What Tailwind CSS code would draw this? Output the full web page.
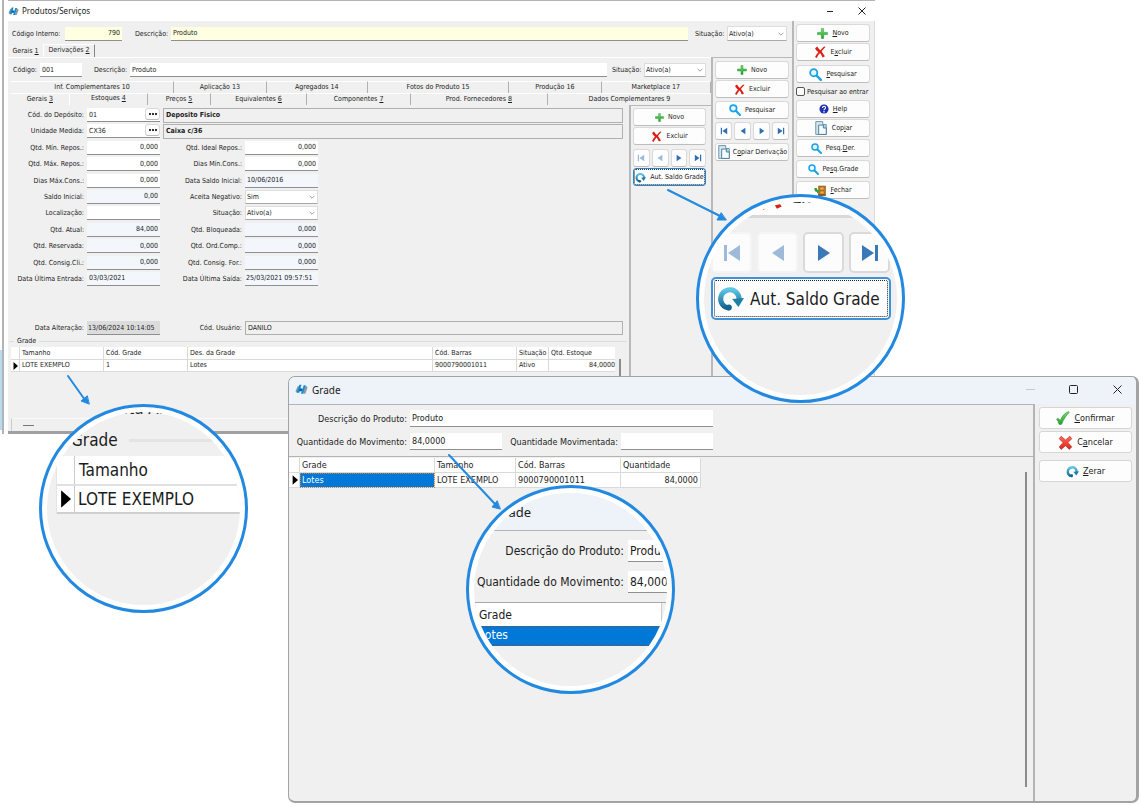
<!DOCTYPE html>
<html lang="pt-BR">
<head>
<meta charset="utf-8">
<title>Produtos/Serviços</title>
<script src="https://cdn.jsdelivr.net/npm/@tailwindcss/browser@4"></script>
</head>
<body class="relative min-h-screen overflow-hidden bg-white font-['DejaVu_Sans_Condensed','DejaVu_Sans',sans-serif] text-[7px] leading-[12px] text-[#1c1c1c]">

<svg class="absolute size-0" aria-hidden="true">
  <defs>
    <linearGradient id="gGreen" x1="0" y1="0" x2="0" y2="1"><stop offset="0" stop-color="#7be07b"/><stop offset="1" stop-color="#1f9a2a"/></linearGradient>
    <linearGradient id="gTeal" x1="0" y1="0" x2="0" y2="1"><stop offset="0" stop-color="#5cc4e4"/><stop offset="1" stop-color="#15658f"/></linearGradient>
    <linearGradient id="gRed" x1="0" y1="0" x2="0" y2="1"><stop offset="0" stop-color="#ff6b5e"/><stop offset="1" stop-color="#d9261c"/></linearGradient>
    <symbol id="logo" viewBox="0 0 24 20"><path d="M1 13 5 4h4L5 15H2z" fill="#8d979d"/><path d="M19 4h3l1 3-4 11h-4z" fill="#8d979d"/><path d="M8 1h4L8 16H3z" fill="#168bd2"/><path d="M9 8h5l-1 5H8z" fill="#0d5b94"/><path d="M16 2h4l-5 16h-4z" fill="#168bd2"/></symbol>
    <symbol id="plus" viewBox="0 0 20 20"><path d="M8 1h4v7h7v4h-7v7H8v-7H1V8h7z" fill="url(#gGreen)" stroke="#2c9a35" stroke-width="1"/></symbol>
    <symbol id="ex" viewBox="0 0 22 22"><path d="M2 4 6 1c2 3 3 5 6 7 2-3 4-5 7-7l2 1c-3 3-5 5-7 8 2 3 4 6 6 9l-4 2c-2-3-3-6-5-8-2 2-4 5-6 9l-3-2c2-4 4-6 6-9-3-2-5-5-6-7z" fill="#dc1e14"/></symbol>
    <symbol id="lens" viewBox="0 0 22 22"><circle cx="8" cy="8" r="6" fill="#e6f7ff" stroke="#17a3e6" stroke-width="3"/><path d="m13 13 7 7" stroke="#17a3e6" stroke-width="4" stroke-linecap="round"/></symbol>
    <symbol id="help" viewBox="0 0 22 22"><circle cx="11" cy="11" r="10" fill="#1b2fb0"/><path d="M7.500 9c0-5 7-5 7-1 0 3-3.500 2.500-3.500 5.500M11 15.500v3" fill="none" stroke="#fff" stroke-width="2.500"/></symbol>
    <symbol id="copy" viewBox="0 0 24 24"><path d="M3 1h12v5h6v17H3z" fill="#d5e6f0" stroke="#5f8ba3" stroke-width="1.500"/><path d="M8 7h8l5 5v11H8z" fill="#f5fbfe" stroke="#3d7590" stroke-width="1.500"/><path d="M16 7v5h5" fill="#b9d9e8" stroke="#3d7590" stroke-width="1.500"/></symbol>
    <symbol id="door" viewBox="0 0 24 22"><path d="M9 2h14v19H9z" fill="#c9791f" stroke="#7a4a12"/><path d="M12 4h8v6h-8zM12 12h8v6h-8z" fill="#eab04e" stroke="#8a5515"/><path d="M1 6h5v3l6 3-6 5v-3c-3 0-4-2-5-4z" fill="#2f9e38"/><path d="M8 20h15" stroke="#5b3a10" stroke-width="2"/></symbol>
    <symbol id="first" viewBox="0 0 20 20"><path d="M2 2h3v16H2zM18 2v16L6 10z" fill="currentColor"/></symbol>
    <symbol id="prev" viewBox="0 0 20 20"><path d="M16 2v16L4 10z" fill="currentColor"/></symbol>
    <symbol id="next" viewBox="0 0 20 20"><path d="M4 2v16l12-8z" fill="currentColor"/></symbol>
    <symbol id="last" viewBox="0 0 20 20"><path d="M15 2h3v16h-3zM2 2v16l12-8z" fill="currentColor"/></symbol>
    <symbol id="redo" viewBox="0 0 24 24"><path d="M11 20.500C5 20 2.500 15 3.500 10.500 5 4 14 2 18 7.500c1.500 2 2 4 1.500 6" fill="none" stroke="url(#gTeal)" stroke-width="4.500"/><path d="m13.500 12.500 10.500-1-5 8z" fill="#1f7fa8"/><circle cx="10.500" cy="20" r="2.700" fill="#15658f"/></symbol>
    <symbol id="check" viewBox="0 0 24 24"><path d="M1 14c2-2 4-2 6 3C10 9 15 3 22 1l1 1C17 8 13 14 10 22c-1 2-4 2-5 0-1-3-2-6-4-8z" fill="url(#gGreen)" stroke="#27942f" stroke-width="1"/></symbol>
    <symbol id="cancel" viewBox="0 0 24 24"><path d="m5 2 7 6 7-6 3 4-6 6 6 7-4 4-6-6-7 6-3-4 6-7-6-6z" fill="url(#gRed)" stroke="#b9231a" stroke-width="1"/></symbol>
    <symbol id="chev" viewBox="0 0 10 10"><path d="m1 3 4 4 4-4" fill="none" stroke="#777" stroke-width="1.200"/></symbol>
    <symbol id="mark" viewBox="0 0 10 16"><path d="M1 0v16l9-8z" fill="#000"/></symbol>
  </defs>
</svg>

<div class="absolute top-[350px] left-0 h-[80px] w-[2px] bg-[#b5dbf3]"></div>

<!-- Produtos/Serviços -->
<main class="absolute top-0 right-[266px] left-[2px] border-l-2 border-[#b4b4b4] bg-white pl-1
  [&_input]:h-[14px] [&_input]:min-w-0 [&_input]:shrink-0 [&_input]:border-b [&_input]:border-[#8f8f8f] [&_input]:bg-white [&_input]:px-[2px]
  [&_label]:shrink-0 [&_label]:whitespace-nowrap
  [&_button]:flex [&_button]:h-[18px] [&_button]:items-center [&_button]:justify-center [&_button]:gap-1 [&_button]:rounded-[3px] [&_button]:border [&_button]:border-b-[#bdbdbd] [&_button]:border-[#d9d9d9] [&_button]:bg-[#fdfdfd] [&_button]:whitespace-nowrap">
  <header class="flex h-[21px] items-center gap-[3px] border-t border-[#b4b4b4] font-['Noto_Sans',sans-serif] text-[8px]">
    <svg class="h-[9px] w-[11px]"><use href="#logo"/></svg>
    <h1 class="flex-1">Produtos/Serviços</h1>
    <svg class="mr-[21px] size-[8px]" viewBox="0 0 8 8"><path d="M1 4.500h6" stroke="#222"/></svg>
    <svg class="mr-[9px] size-[8px]" viewBox="0 0 8 8"><path d="m.5.5 7 7m0-7-7 7" stroke="#222"/></svg>
  </header>

  <div class="flex border-r border-b-[3px] border-r-[#dcdcdc] border-b-[#a0a0a0] bg-[#f0f0f0]">
    <div class="min-w-0 flex-1">
      <div class="flex h-[23px] items-center gap-[2px] pt-[2px] pl-1">
        <label for="ci" class="w-[51px]">Código Interno:</label>
        <input id="ci" value="790" class="w-[57px] bg-[#ffffe1]! text-right">
        <label for="d1" class="ml-[11px] w-[34px]">Descrição:</label>
        <input id="d1" value="Produto" class="flex-1 bg-[#ffffe1]!">
        <label for="s1" class="ml-[5px] w-[30px]">Situação:</label>
        <span class="mr-[5px] flex h-[15px] w-[60px] items-center border border-[#ddd] border-b-[#aaa] bg-white pr-[2px]">
          <select id="s1" class="min-w-0 flex-1 appearance-none pl-px"><option>Ativo(a)</option></select><svg class="size-[6px]"><use href="#chev"/></svg>
        </span>
      </div>
      <nav class="flex h-[13px]">
        <a href="#gerais" class="w-[35px] pt-px text-center">Gerais <u>1</u></a>
        <a href="#derivacoes" class="h-[14px] w-[52px] border-t border-r border-l border-t-white border-r-[#888] border-l-white text-center leading-[11px]">Derivações <u>2</u></a>
      </nav>
      <div class="flex">
        <div class="min-w-0 flex-1">
          <div class="flex h-[24px] items-center gap-[2px] border-t border-white pt-px pr-[5px] pl-[5px]">
            <label for="co" class="w-[25px]">Código:</label>
            <input id="co" value="001" class="w-[42px]">
            <label for="d2" class="ml-[10px] w-[34px]">Descrição:</label>
            <input id="d2" value="Produto" class="flex-1">
            <label for="s2" class="ml-[3px] w-[30px]">Situação:</label>
            <span class="flex h-[14px] w-[62px] items-center border border-[#ddd] border-b-[#aaa] bg-white pr-[2px]">
              <select id="s2" class="min-w-0 flex-1 appearance-none pl-px"><option>Ativo(a)</option></select><svg class="size-[6px]"><use href="#chev"/></svg>
            </span>
          </div>
          <nav class="flex h-[12px] pl-[3px] text-center leading-[11px] whitespace-nowrap *:border-t *:border-r *:border-t-white *:border-r-[#b0b0b0]">
            <a href="#t10" class="flex-[163]">Inf. Complementares 10</a>
            <a href="#t13" class="flex-[92]">Aplicação 13</a>
            <a href="#t14" class="flex-[101]">Agregados 14</a>
            <a href="#t15" class="flex-[141]">Fotos do Produto 15</a>
            <a href="#t16" class="flex-[92]">Produção 16</a>
            <a href="#t17" class="flex-[109]">Marketplace 17</a>
          </nav>
          <nav class="flex h-[12px] pl-[3px] text-center leading-[11px] whitespace-nowrap *:border-t *:border-r *:border-t-white *:border-r-[#b0b0b0]">
            <a href="#t3" class="flex-[58] border-r-white!">Gerais <u>3</u></a>
            <a href="#t4" class="flex-[78] leading-[9px]">Estoques <u>4</u></a>
            <a href="#t5" class="flex-[62]">Preços <u>5</u></a>
            <a href="#t6" class="flex-[96]">Equivalentes <u>6</u></a>
            <a href="#t7" class="flex-[103]">Componentes <u>7</u></a>
            <a href="#t8" class="flex-[137]">Prod. Fornecedores <u>8</u></a>
            <a href="#t9" class="flex-[164] border-r-0!">Dados Complementares 9</a>
          </nav>
          <div class="flex">
            <div class="min-w-0 flex-1">
              <form class="flex h-[182px] flex-col justify-between pt-[2px] pr-[6px] *:flex *:h-4 *:items-center *:gap-[3px] [&_label]:w-[76px] [&_label]:text-right [&_input]:w-[73px]">
                <div><label for="f1">Cód. do Depósito:</label><span class="flex w-[73px] border-b border-[#8f8f8f] bg-white"><input id="f1" value="01" class="h-[13px]! w-0! flex-1 border-0!"><button type="button" aria-label="Procurar depósito" class="h-[12px]! w-[15px]"><svg class="h-[2px] w-[8px]" viewBox="0 0 8 2"><path d="M0 0h2v2H0zM3 0h2v2H3zM6 0h2v2H6z" fill="#333"/></svg></button></span><output class="h-[15px] flex-1 border border-[#b0b0b0] px-[2px] font-bold">Deposito Fisico</output></div>
                <div><label for="f2">Unidade Medida:</label><span class="flex w-[73px] border-b border-[#8f8f8f] bg-white"><input id="f2" value="CX36" class="h-[13px]! w-0! flex-1 border-0!"><button type="button" aria-label="Procurar unidade" class="h-[12px]! w-[15px]"><svg class="h-[2px] w-[8px]" viewBox="0 0 8 2"><path d="M0 0h2v2H0zM3 0h2v2H3zM6 0h2v2H6z" fill="#333"/></svg></button></span><output class="h-[15px] flex-1 border border-[#b0b0b0] px-[2px] font-bold">Caixa c/36</output></div>
                <div><label for="f3">Qtd. Mín. Repos.:</label><input id="f3" value="0,000" class="text-right"><label for="g3" class="w-[79px]!">Qtd. Ideal Repos.:</label><input id="g3" value="0,000" class="text-right"></div>
                <div><label for="f4">Qtd. Máx. Repos.:</label><input id="f4" value="0,000" class="text-right"><label for="g4" class="w-[79px]!">Dias Mín.Cons.:</label><input id="g4" value="0,000" class="text-right"></div>
                <div><label for="f5">Dias Máx.Cons.:</label><input id="f5" value="0,000" class="text-right"><label for="g5" class="w-[79px]!">Data Saldo Inicial:</label><input id="g5" value="10/06/2016" class="bg-[#f3f7fc]!"></div>
                <div><label for="f6">Saldo Inicial:</label><input id="f6" value="0,00" class="bg-[#f3f7fc]! text-right"><label for="g6" class="w-[79px]!">Aceita Negativo:</label><span class="flex h-[14px] w-[73px] items-center border border-[#ddd] border-b-[#aaa] bg-white pr-[2px]"><select id="g6" class="min-w-0 flex-1 appearance-none pl-px"><option>Sim</option></select><svg class="size-[6px]"><use href="#chev"/></svg></span></div>
                <div><label for="f7">Localização:</label><input id="f7" value=""><label for="g7" class="w-[79px]!">Situação:</label><span class="flex h-[14px] w-[73px] items-center border border-[#ddd] border-b-[#aaa] bg-white pr-[2px]"><select id="g7" class="min-w-0 flex-1 appearance-none pl-px"><option>Ativo(a)</option></select><svg class="size-[6px]"><use href="#chev"/></svg></span></div>
                <div><label for="f8">Qtd. Atual:</label><input id="f8" value="84,000" class="bg-[#f3f7fc]! text-right"><label for="g8" class="w-[79px]!">Qtd. Bloqueada:</label><input id="g8" value="0,000" class="bg-[#f3f7fc]! text-right"></div>
                <div><label for="f9">Qtd. Reservada:</label><input id="f9" value="0,000" class="bg-[#f3f7fc]! text-right"><label for="g9" class="w-[79px]!">Qtd. Ord.Comp.:</label><input id="g9" value="0,000" class="bg-[#f3f7fc]! text-right"></div>
                <div><label for="f10">Qtd. Consig.Cli.:</label><input id="f10" value="0,000" class="bg-[#f3f7fc]! text-right"><label for="g10" class="w-[79px]!">Qtd. Consig. For.:</label><input id="g10" value="0,000" class="bg-[#f3f7fc]! text-right"></div>
                <div><label for="f11">Data Última Entrada:</label><input id="f11" value="03/03/2021" class="bg-[#f3f7fc]!"><label for="g11" class="w-[79px]!">Data Última Saída:</label><input id="g11" value="25/03/2021 09:57:51" class="bg-[#f3f7fc]! px-px!"></div>
              </form>
              <div class="mt-[33px] flex h-4 items-center gap-[3px] pr-[6px]">
                <label for="da" class="w-[76px] text-right">Data Alteração:</label>
                <input id="da" value="13/06/2024 10:14:05" class="w-[73px] bg-[#dcdcdc]! px-px!">
                <label for="cu" class="w-[79px] text-right">Cód. Usuário:</label>
                <input id="cu" value="DANILO" class="flex-1 border! border-[#b0b0b0]! bg-transparent!">
              </div>
              <fieldset class="mr-[2px] ml-px border-t border-[#dcdcdc]">
                <legend class="ml-[5px] px-[3px] leading-[10px]">Grade</legend>
                <div class="ml-[2px] flex items-start pt-px pr-[6px]">
                  <table class="flex-1 table-fixed border-separate border-spacing-0 bg-white text-left [&_td]:h-[12px] [&_td]:border-r [&_td]:border-b [&_td]:border-[#dadada] [&_td]:py-0 [&_td]:pl-[2px] [&_td]:leading-[11px] [&_th]:h-[13px] [&_th]:border-r [&_th]:border-b [&_th]:border-[#dadada] [&_th]:py-0 [&_th]:pl-[2px] [&_th]:font-normal">
                    <tr><th class="w-[9px]"></th><th class="w-[84px]">Tamanho</th><th class="w-[84px]">Cód. Grade</th><th>Des. da Grade</th><th class="w-[84px]">Cód. Barras</th><th class="w-[32px]">Situação</th><th class="w-[66px] border-r-0!">Qtd. Estoque</th></tr>
                    <tr><td><svg class="h-[8px] w-[5px]"><use href="#mark"/></svg></td><td>LOTE EXEMPLO</td><td>1</td><td>Lotes</td><td>9000790001011</td><td>Ativo</td><td class="border-r-0! text-right">84,0000</td></tr>
                  </table>
                  <div class="mt-[12px] ml-1 h-[29px] w-[2px] bg-[#8c8c8c]"></div>
                </div>
                <div class="mt-[30px] ml-[2px] flex h-[13px] items-center border-t border-l border-[#fafafa] border-l-[#ccc] pl-[11px]"><div class="h-px w-[11px] bg-[#777]"></div></div>
              </fieldset>
            </div>
            <aside class="flex w-[82px] shrink-0 flex-col border-t border-l-2 border-[#b8b8b8] pt-[2px] pr-[5px] pl-[2px]">
              <button><svg class="size-[9px]"><use href="#plus"/></svg>Novo</button>
              <button class="mt-px"><svg class="size-[11px]"><use href="#ex"/></svg>Excluir</button>
              <div class="mt-1 flex gap-[2px] *:flex-1">
                <button aria-label="Primeiro" disabled class="px-0 text-[#9dbbd9]"><svg class="size-[8px] shrink-0"><use href="#first"/></svg></button>
                <button aria-label="Anterior" disabled class="px-0 text-[#9dbbd9]"><svg class="size-[8px] shrink-0"><use href="#prev"/></svg></button>
                <button aria-label="Próximo" class="px-0 text-[#2f6fb3]"><svg class="size-[8px] shrink-0"><use href="#next"/></svg></button>
                <button aria-label="Último" class="px-0 text-[#2f6fb3]"><svg class="size-[8px] shrink-0"><use href="#last"/></svg></button>
              </div>
              <button class="mt-px border-[#2583cf]! outline-1 -outline-offset-2 outline-dotted outline-[#333]"><svg class="size-[11px] shrink-0"><use href="#redo"/></svg>Aut. Saldo Grade</button>
            </aside>
          </div>
        </div>
        <aside class="flex w-[81px] shrink-0 flex-col border-t border-l-2 border-[#b8b8b8] pt-[3px] pr-[3px] pl-[2px]">
          <button><svg class="size-[10px]"><use href="#plus"/></svg>Novo</button>
          <button class="mt-px"><svg class="size-[11px]"><use href="#ex"/></svg>Excluir</button>
          <button class="mt-[3px]"><svg class="size-[12px]"><use href="#lens"/></svg>Pesquisar</button>
          <div class="my-[3px] flex gap-[2px] text-[#2f6fb3] *:flex-1">
            <button aria-label="Primeiro" class="px-0"><svg class="size-[8px] shrink-0"><use href="#first"/></svg></button>
            <button aria-label="Anterior" class="px-0"><svg class="size-[8px] shrink-0"><use href="#prev"/></svg></button>
            <button aria-label="Próximo" class="px-0"><svg class="size-[8px] shrink-0"><use href="#next"/></svg></button>
            <button aria-label="Último" class="px-0"><svg class="size-[8px] shrink-0"><use href="#last"/></svg></button>
          </div>
          <button class="gap-[2px]!"><svg class="size-[14px] shrink-0"><use href="#copy"/></svg><span>C<u>o</u>piar Derivação</span></button>
        </aside>
      </div>
    </div>
    <aside class="flex w-[82px] shrink-0 flex-col border-l-2 border-[#b8b8b8] pt-[3px] pr-[4px] pl-[2px]">
      <button><svg class="size-[11px]"><use href="#plus"/></svg><span><u>N</u>ovo</span></button>
      <button class="mt-px"><svg class="size-[12px]"><use href="#ex"/></svg><span>E<u>x</u>cluir</span></button>
      <button class="mt-[4px]"><svg class="size-[13px]"><use href="#lens"/></svg><span><u>P</u>esquisar</span></button>
      <label class="flex h-[17px] items-center gap-[2px]"><input type="checkbox" class="size-[9px]! appearance-none rounded-[2px] border! border-[#555]! p-0!">Pesquisar ao entrar</label>
      <button><svg class="size-[10px]"><use href="#help"/></svg><span><u>H</u>elp</span></button>
      <button class="mt-px"><svg class="size-[14px]"><use href="#copy"/></svg><span>Cop<u>i</u>ar</span></button>
      <button class="mt-[2px]"><svg class="size-[11px]"><use href="#lens"/></svg><span>Pesq.<u>D</u>er.</span></button>
      <button class="mt-[3px]"><svg class="size-[11px]"><use href="#lens"/></svg><span>Pe<u>s</u>q.Grade</span></button>
      <button class="mt-[3px]"><svg class="h-[11px] w-[12px]"><use href="#door"/></svg><span><u>F</u>echar</span></button>
    </aside>
  </div>
</main>

<!-- Grade -->
<section class="absolute top-[376px] right-[2px] bottom-[2px] left-[288px] flex flex-col overflow-hidden rounded-[7px] border border-r-[3px] border-b-2 border-[#a3a3a3] bg-[#f0f0f0] text-[9px]
  [&_input]:h-[17px] [&_input]:min-w-0 [&_input]:border-b [&_input]:border-[#8f8f8f] [&_input]:bg-white [&_input]:px-[2px] [&_label]:text-right [&_label]:whitespace-nowrap
  [&_button]:flex [&_button]:h-[22px] [&_button]:items-center [&_button]:justify-center [&_button]:gap-1 [&_button]:rounded-[3px] [&_button]:border [&_button]:border-[#d6d6d6] [&_button]:bg-[#fdfdfd]">
  <header class="flex h-[27px] shrink-0 items-center gap-1 bg-[#eef3fa] pb-[2px] pl-[6px] font-['Noto_Sans',sans-serif] text-[10px]">
    <svg class="h-[11px] w-[13px]"><use href="#logo"/></svg>
    <h2 class="flex-1">Grade</h2>
    <svg class="mr-[30px] size-[9px]" viewBox="0 0 9 9"><path d="M0 4.500h9" stroke="#c4cad2"/></svg>
    <svg class="mr-[31px] size-[9px]" viewBox="0 0 9 9"><rect x=".5" y=".5" width="8" height="8" rx="1" fill="none" stroke="#222"/></svg>
    <svg class="mr-[14px] size-[9px]" viewBox="0 0 9 9"><path d="m.5.5 8 8m0-8-8 8" stroke="#222"/></svg>
  </header>
  <div class="flex flex-1">
    <div class="flex min-w-0 flex-1 flex-col border-r-2 border-[#b4b4b4]">
      <div class="flex flex-col gap-[6px] border-y border-[#b4b4b4] pt-[5px] pb-[6px]">
        <div class="flex items-center gap-[3px]"><label for="p1" class="w-[118px]">Descrição do Produto:</label><input id="p1" value="Produto" class="w-[303px]"></div>
        <div class="flex items-center gap-[3px]"><label for="p2" class="w-[118px]">Quantidade do Movimento:</label><input id="p2" value="84,0000" class="w-[92px]"><label for="p3" class="w-[113px]">Quantidade Movimentada:</label><input id="p3" value="" class="w-[92px]"></div>
      </div>
      <div class="flex flex-1 items-start">
        <table class="mt-px w-[412px] table-fixed border-separate border-spacing-0 bg-white text-left [&_td]:h-[15px] [&_td]:border-r [&_td]:border-b [&_td]:border-[#dadada] [&_td]:p-0 [&_td]:pl-[2px] [&_td]:leading-[13px] [&_th]:h-[15px] [&_th]:border-r [&_th]:border-b [&_th]:border-[#dadada] [&_th]:p-0 [&_th]:pl-[2px] [&_th]:font-normal">
          <tr><th class="w-[11px]"></th><th class="w-[135px]">Grade</th><th class="w-[81px]">Tamanho</th><th class="w-[105px]">Cód. Barras</th><th class="w-[80px]">Quantidade</th></tr>
          <tr><td class="pl-[3px]!"><svg class="h-[10px] w-[6px]"><use href="#mark"/></svg></td><td class="bg-[#0078d7] text-white outline-1 -outline-offset-1 outline-dotted outline-[#d98432]">Lotes</td><td class="whitespace-nowrap">LOTE EXEMPLO</td><td>9000790001011</td><td class="pr-[2px]! text-right">84,0000</td></tr>
        </table>
        <div class="mt-[15px] mr-[6px] mb-[14px] ml-auto w-[2px] self-stretch bg-[#8c8c8c]"></div>
      </div>
    </div>
    <aside class="flex w-[101px] flex-col gap-[2px] pt-[3px] pr-[4px] pl-[4px]">
      <button><svg class="size-[14px]"><use href="#check"/></svg><span><u>C</u>onfirmar</span></button>
      <button><svg class="size-[15px]"><use href="#cancel"/></svg><span>C<u>a</u>ncelar</span></button>
      <button class="mt-[5px]"><svg class="size-[13px]"><use href="#redo"/></svg><span><u>Z</u>erar</span></button>
    </aside>
  </div>
</section>

<!-- Callout arrows -->
<svg class="pointer-events-none absolute top-0 left-0 h-[805px] w-[1141px]" fill="none" stroke="#2389e0" stroke-width="2" stroke-linecap="round">
  <path d="m68 376 17 24M668 190l52 26M449 455l46 49"/>
  <path d="m89 404-8-3 6-5zM726 220l-9 0 4-7zM500 509l-8-2 5-6z" fill="#2389e0" stroke-width="1"/>
</svg>

<!-- Magnified: table of sizes -->
<div class="absolute top-[404px] left-[39px] size-[209px] rounded-full border-[3px] border-[#2389e0] bg-white p-[5px] text-[17px] leading-[20px] whitespace-nowrap">
  <div class="h-full overflow-hidden rounded-full bg-[#f0f0f0]">
    <div class="-mt-[14px] pl-[60px]">Data Alteração:</div>
    <div class="mt-3 flex h-[20px] items-center gap-[11px] pl-6">Grade<span class="h-[3px] flex-1 bg-[#e4e4e4]"></span></div>
    <div class="mt-[6px] ml-[9px] border-l border-[#e4e4e4] bg-white">
      <div class="flex h-[30px] items-center border-b-2 border-[#e0e0e0]"><span class="h-full w-[18px] border-r border-[#ccc]"></span><span class="pl-1">Tamanho</span></div>
      <div class="flex h-[28px] items-center border-b-2 border-[#cfcfcf]"><span class="flex h-full w-[18px] items-center border-r border-[#ccc] pl-[3px]"><svg class="h-[18px] w-[11px]" viewBox="0 0 10 16"><use href="#mark"/></svg></span><span class="pl-[3px]">LOTE EXEMPLO</span></div>
    </div>
  </div>
</div>

<!-- Magnified: automatic balance button -->
<div class="absolute top-[194px] left-[696px] size-[209px] rounded-full border-[3px] border-[#2389e0] bg-white p-[5px] text-[17px] whitespace-nowrap">
  <div class="h-full overflow-hidden rounded-full bg-[#f0f0f0]">
    <div class="-mt-[24px] flex h-[40px] items-center gap-2 border-b-[3px] border-[#d8d8d8] bg-[#fdfdfd] pl-[54px]"><svg class="size-[26px]"><use href="#ex"/></svg>Excluir</div>
    <div class="mt-[14px] ml-[7px] flex w-[179px] gap-[5px] *:flex *:h-[41px] *:flex-1 *:items-center *:justify-center *:rounded-[5px] *:border-2 *:bg-[#fcfcfc]">
      <button aria-label="Primeiro" disabled class="border-[#f4f4f4] text-[#9dbbd9]"><svg class="size-[20px] shrink-0"><use href="#first"/></svg></button>
      <button aria-label="Anterior" disabled class="border-[#f4f4f4] text-[#9dbbd9]"><svg class="size-[20px] shrink-0"><use href="#prev"/></svg></button>
      <button aria-label="Próximo" class="border-[#dadada] text-[#3a78b8]"><svg class="size-[20px] shrink-0"><use href="#next"/></svg></button>
      <button aria-label="Último" class="border-[#dadada] text-[#3a78b8]"><svg class="size-[20px] shrink-0"><use href="#last"/></svg></button>
    </div>
    <button class="mt-[4px] ml-[7px] flex h-[43px] w-[180px] items-center gap-[6px] rounded-[5px] border-2 border-[#3d92d9] bg-[#fdfdfd] pl-[4px] outline-1 -outline-offset-4 outline-dotted outline-[#222]"><svg class="size-[27px] shrink-0"><use href="#redo"/></svg>Aut. Saldo Grade</button>
  </div>
</div>

<!-- Magnified: movement form -->
<div class="absolute top-[485px] left-[466px] size-[209px] rounded-full border-[3px] border-[#2389e0] bg-white p-[5px] text-[12px] leading-[16px] whitespace-nowrap">
  <div class="h-full overflow-hidden rounded-full bg-[#f0f0f0]">
    <div class="flex h-[38px] items-center border-b border-[#b4b4b4] bg-[#eef3fa] pl-[20px] font-['Noto_Sans',sans-serif] text-[13px]">Grade</div>
    <div class="-ml-2 flex flex-col gap-[9px] border-b border-[#a8a8a8] pt-[9px] pb-[9px]">
      <div class="flex items-center gap-1"><label for="z1" class="w-[158px] shrink-0 text-right">Descrição do Produto:</label><input id="z1" value="Produto" class="h-[22px] w-[60px] shrink-0 border-b border-[#8f8f8f] bg-white px-[2px]"></div>
      <div class="flex items-center gap-1"><label for="z2" class="w-[158px] shrink-0 text-right">Quantidade do Movimento:</label><input id="z2" value="84,0000" class="h-[22px] w-[60px] shrink-0 border-b border-[#8f8f8f] bg-white px-[2px]"></div>
    </div>
    <div class="ml-[2px] h-[23px] w-[186px] border-r border-[#ccc] bg-white pt-[4px] pl-[3px]">Grade</div>
    <div class="ml-[2px] h-[20px] w-[185px] border border-dotted border-[#7a5230] bg-[#0078d7] pl-[2px] text-white">Lotes</div>
  </div>
</div>
</body>
</html>
